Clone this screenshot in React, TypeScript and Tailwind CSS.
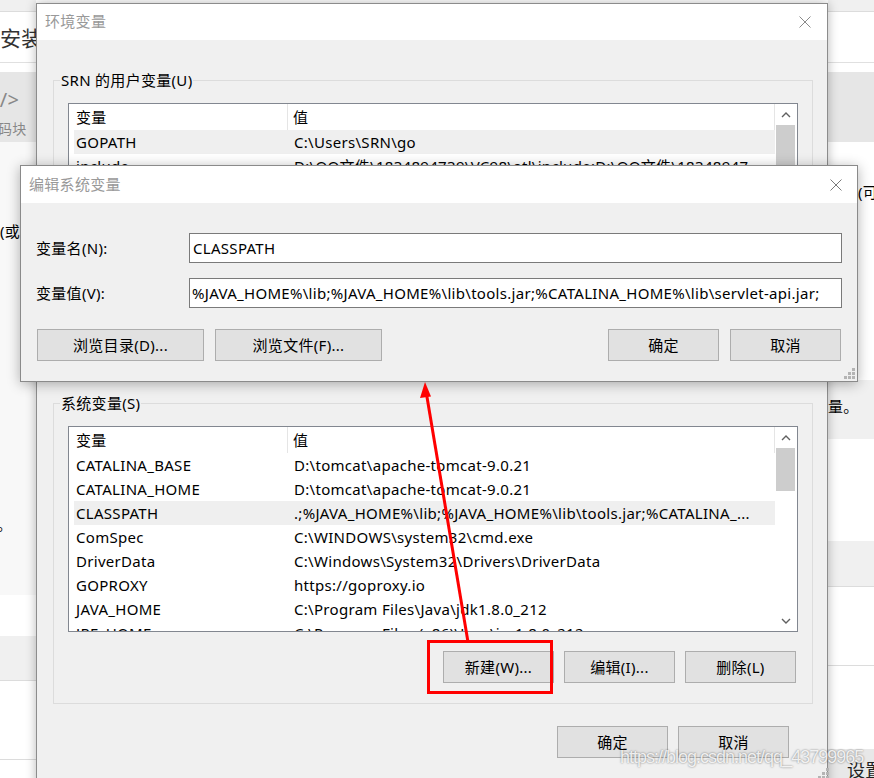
import type { ReactNode } from 'react';

const FONT = "font-['Noto_Sans','Noto_Sans_CJK_SC',sans-serif] tracking-[0.3px]";

type Row = [string, string];

// only the rows that peek out above the edit dialog
const userRows: Row[] = [
  ['GOPATH', 'C:\\Users\\SRN\\go'],
  ['include', 'D:\\QQ文件\\1834894739\\VC98\\atl\\include;D:\\QQ文件\\18348947...'],
];

const sysRows: Row[] = [
  ['CATALINA_BASE', 'D:\\tomcat\\apache-tomcat-9.0.21'],
  ['CATALINA_HOME', 'D:\\tomcat\\apache-tomcat-9.0.21'],
  ['CLASSPATH', '.;%JAVA_HOME%\\lib;%JAVA_HOME%\\lib\\tools.jar;%CATALINA_...'],
  ['ComSpec', 'C:\\WINDOWS\\system32\\cmd.exe'],
  ['DriverData', 'C:\\Windows\\System32\\Drivers\\DriverData'],
  ['GOPROXY', 'https://goproxy.io'],
  ['JAVA_HOME', 'C:\\Program Files\\Java\\jdk1.8.0_212'],
  ['JRE_HOME', 'C:\\Program Files (x86)\\Java\\jre1.8.0_212'],
];

function Chevron({ down }: { down?: boolean }) {
  return (
    <svg width="10" height="6" viewBox="0 0 10 6">
      <path
        d={down ? 'M1 1 L5 5 L9 1' : 'M1 5 L5 1 L9 5'}
        fill="none"
        stroke="#606060"
        strokeWidth="1.4"
      />
    </svg>
  );
}

function CloseX({ color }: { color: string }) {
  return (
    <svg width="12" height="12" viewBox="0 0 12 12">
      <path d="M0.5 0.5 L11.5 11.5 M11.5 0.5 L0.5 11.5" stroke={color} strokeWidth="1" />
    </svg>
  );
}

function Grip({ className }: { className: string }) {
  const dots = [
    [8, 0],
    [4, 4],
    [8, 4],
    [0, 8],
    [4, 8],
    [8, 8],
  ];
  return (
    <svg className={className} width="11" height="11" viewBox="0 0 11 11">
      {dots.map(([x, y]) => (
        <rect key={`${x}-${y}`} x={x} y={y} width="3" height="3" fill="#b4b4b4" />
      ))}
    </svg>
  );
}

function Btn({ className, children }: { className: string; children: ReactNode }) {
  return (
    <div
      className={`flex h-[32px] shrink-0 items-center justify-center border border-[#adadad] bg-[#e1e1e1] text-[15px] text-black ${className}`}
    >
      {children}
    </div>
  );
}

function VarList({
  rows,
  selected,
  heightClass,
  thumbClass,
}: {
  rows: Row[];
  selected: string;
  heightClass: string;
  thumbClass: string;
}) {
  return (
    <div className={`flex overflow-hidden border border-[#828790] bg-white ${heightClass}`}>
      <div className="flex min-w-0 flex-1 flex-col pl-[5px] text-[15px] text-black">
        <div className="flex h-[26px] shrink-0 items-stretch border-r border-[#e5e5e5]">
          <div className="flex w-[214px] shrink-0 items-center border-r border-[#e5e5e5] pl-[2px]">变量</div>
          <div className="flex items-center pl-[5px]">值</div>
        </div>
        {rows.map(([name, value]) => (
          <div
            key={name}
            className={`flex h-[24px] shrink-0 items-center whitespace-nowrap ${name === selected ? 'bg-[#efefef]' : ''}`}
          >
            <div className="w-[214px] shrink-0 pl-[2px]">{name}</div>
            <div className="min-w-0 overflow-hidden pl-[6px]">{value}</div>
          </div>
        ))}
      </div>
      <div className="flex w-[22px] shrink-0 flex-col pl-[1px] pr-[2px]">
        <div className="flex h-[21px] shrink-0 items-center justify-center">
          <Chevron />
        </div>
        <div className={`shrink-0 bg-[#cdcdcd] ${thumbClass}`} />
        <div className="flex-1" />
        <div className="flex h-[21px] shrink-0 items-center justify-center">
          <Chevron down />
        </div>
      </div>
    </div>
  );
}

function EnvDialog() {
  return (
    <div className="absolute left-[36px] top-[3px] h-[800px] w-[792px] border border-[#8c8c8c] bg-[#f0f0f0] shadow-[0_0_10px_rgba(0,0,0,0.28)]">
      <div className="flex h-[36px] items-center justify-between bg-white pl-[8px] pr-[16px]">
        <span className="-mt-[2px] text-[15px] text-[#999999]">环境变量</span>
        <CloseX color="#8a8a8a" />
      </div>

      <div className="pt-[30px]">
        {/* user variables: mostly covered by the edit dialog */}
        <fieldset className="ml-[16px] w-[760px] min-w-0 border border-[#dcdcdc] pb-[20px] pl-[6px] pr-[14px] pt-[13px]">
          <legend className="px-[1px] text-[15px] leading-[20px] text-black">SRN 的用户变量(U)</legend>
          <div className="ml-[8px]">
            <VarList rows={userRows} selected="GOPATH" heightClass="h-[200px]" thumbClass="h-[150px]" />
            <div className="mt-[19px] h-[32px]" />
          </div>
        </fieldset>

        <fieldset className="ml-[16px] mt-[18px] w-[760px] min-w-0 border border-[#dcdcdc] pb-[20px] pl-[6px] pr-[14px] pt-[13px]">
          <legend className="px-[1px] text-[15px] leading-[20px] text-black">系统变量(S)</legend>
          <div className="ml-[8px]">
            <VarList rows={sysRows} selected="CLASSPATH" heightClass="h-[206px]" thumbClass="h-[43px]" />
            <div className="mt-[19px] flex justify-end gap-[10px] pr-[2px]">
              <Btn className="w-[111px]">新建(W)...</Btn>
              <Btn className="w-[111px]">编辑(I)...</Btn>
              <Btn className="w-[111px]">删除(L)</Btn>
            </div>
          </div>
        </fieldset>

        <div className="ml-[16px] mt-[22px] flex w-[760px] justify-end gap-[10px] pr-[24px]">
          <Btn className="w-[111px]">确定</Btn>
          <Btn className="w-[111px]">取消</Btn>
        </div>
      </div>
      <Grip className="absolute left-[781px] top-[764px]" />
    </div>
  );
}

function EditDialog() {
  return (
    <div className="absolute left-[20px] top-[165px] h-[217px] w-[838px] border border-[#8a8a8a] bg-[#f0f0f0] shadow-[0_2px_12px_rgba(0,0,0,0.3)]">
      <div className="flex h-[37px] items-center justify-between bg-white pl-[8px] pr-[15px]">
        <span className="text-[15px] text-[#999999]">编辑系统变量</span>
        <CloseX color="#7a7a7a" />
      </div>
      <div className="pl-[15px] pr-[15px] pt-[30px] text-[15px] text-black">
        <div className="flex items-center">
          <div className="w-[153px] shrink-0">变量名(N):</div>
          <div className="flex h-[30px] min-w-0 flex-1 items-center border border-[#7a7a7a] bg-white pl-[3px]">CLASSPATH</div>
        </div>
        <div className="mt-[15px] flex items-center">
          <div className="w-[153px] shrink-0">变量值(V):</div>
          <div className="flex h-[30px] min-w-0 flex-1 items-center overflow-hidden whitespace-nowrap border border-[#7a7a7a] bg-white pl-[2px]">
            %JAVA_HOME%\lib;%JAVA_HOME%\lib\tools.jar;%CATALINA_HOME%\lib\servlet-api.jar;
          </div>
        </div>
      </div>
      <div className="mt-[21px] flex gap-[11px] pl-[16px] pr-[16px]">
        <Btn className="w-[167px]">浏览目录(D)...</Btn>
        <Btn className="w-[167px]">浏览文件(F)...</Btn>
        <div className="flex-1" />
        <Btn className="w-[111px]">确定</Btn>
        <Btn className="w-[111px]">取消</Btn>
      </div>
      <Grip className="absolute bottom-[2px] right-[2px]" />
    </div>
  );
}

function LeftStrip() {
  return (
    <div className="flex w-[36px] shrink-0 flex-col overflow-hidden whitespace-nowrap">
      <div className="h-[12px] shrink-0 border-b border-[#dcdcdc] bg-[#f0f0f0]" />
      <div className="flex h-[51px] shrink-0 items-center border-b border-[#e0e0e0] bg-white pt-[4px] text-[21px] text-[#333]">
        <span>安装</span>
      </div>
      <div className="h-[9px] shrink-0 bg-white" />
      <div className="flex h-[70px] shrink-0 flex-col bg-[#e6e6e6] text-[#888]">
        <span className="-ml-[12px] mt-[15px] text-[20px] leading-[26px]">&lt;/&gt;</span>
        <span className="-ml-[2px] mt-[6px] text-[14px] leading-[20px]">码块</span>
      </div>
      <div className="flex h-[453px] shrink-0 flex-col bg-[#f8f8f8] text-[15px] text-black">
        <span className="mt-[79px] leading-[20px]">(或</span>
        <span className="-ml-[3px] mt-[273px] leading-[20px]">。</span>
      </div>
      <div className="h-[41px] shrink-0 bg-white" />
      <div className="h-[45px] shrink-0 border-b border-[#dcdcdc] bg-[#f0f0f0]" />
      <div className="h-[79px] shrink-0 border-b border-[#dcdcdc] bg-white" />
      <div className="flex-1 bg-white" />
    </div>
  );
}

function RightStrip() {
  return (
    <div className="flex w-[46px] shrink-0 flex-col overflow-hidden whitespace-nowrap">
      <div className="h-[12px] shrink-0 border-b border-[#dcdcdc] bg-[#f0f0f0]" />
      <div className="h-[51px] shrink-0 border-b border-[#e0e0e0] bg-white" />
      <div className="h-[9px] shrink-0 bg-white" />
      <div className="h-[70px] shrink-0 bg-[#e6e6e6]" />
      <div className="flex h-[238px] shrink-0 flex-col bg-white text-[15px] text-black">
        <span className="ml-[30px] mt-[40px] leading-[20px]">(可</span>
      </div>
      <div className="flex h-[59px] shrink-0 flex-col bg-[#f0f0f0] text-[15px] text-black">
        <span className="mt-[16px] leading-[20px]">量。</span>
      </div>
      <div className="h-[102px] shrink-0 bg-white" />
      <div className="h-[46px] shrink-0 border-b border-[#dcdcdc] bg-[#f0f0f0]" />
      <div className="h-[79px] shrink-0 border-b border-[#dcdcdc] bg-white" />
      <div className="h-[83px] shrink-0 bg-white" />
      <div className="flex flex-1 bg-[#e8e8e8] text-[18px] text-[#222]">
        <span className="ml-[19px] mt-[9px] leading-[24px]">设置</span>
      </div>
    </div>
  );
}

export default function App() {
  return (
    <div className={`relative h-[778px] w-[874px] overflow-hidden bg-white ${FONT}`}>
      <div className="flex h-full">
        <LeftStrip />
        <div className="flex-1 bg-white" />
        <RightStrip />
      </div>

      <EnvDialog />
      <EditDialog />

      {/* annotation: red box around 新建 and arrow up to the edit dialog */}
      <div className="absolute left-[427px] top-[640px] h-[54px] w-[126px] border-[3px] border-[#ff0000]" />
      <svg className="pointer-events-none absolute left-0 top-0" width="874" height="778">
        <line x1="468" y1="642" x2="426.5" y2="394" stroke="#ff0000" strokeWidth="3" />
        <polygon points="425,382 420,398 431,396.5" fill="#ff0000" />
      </svg>

      <div className="pointer-events-none absolute left-[620px] top-[745px] whitespace-nowrap font-['Liberation_Sans',sans-serif] text-[18px] leading-[24px] tracking-[-1px] text-white/85 [text-shadow:0_0_2px_rgba(0,0,0,0.55)]">
        https://blog.csdn.net/qq_43799965
      </div>
    </div>
  );
}
